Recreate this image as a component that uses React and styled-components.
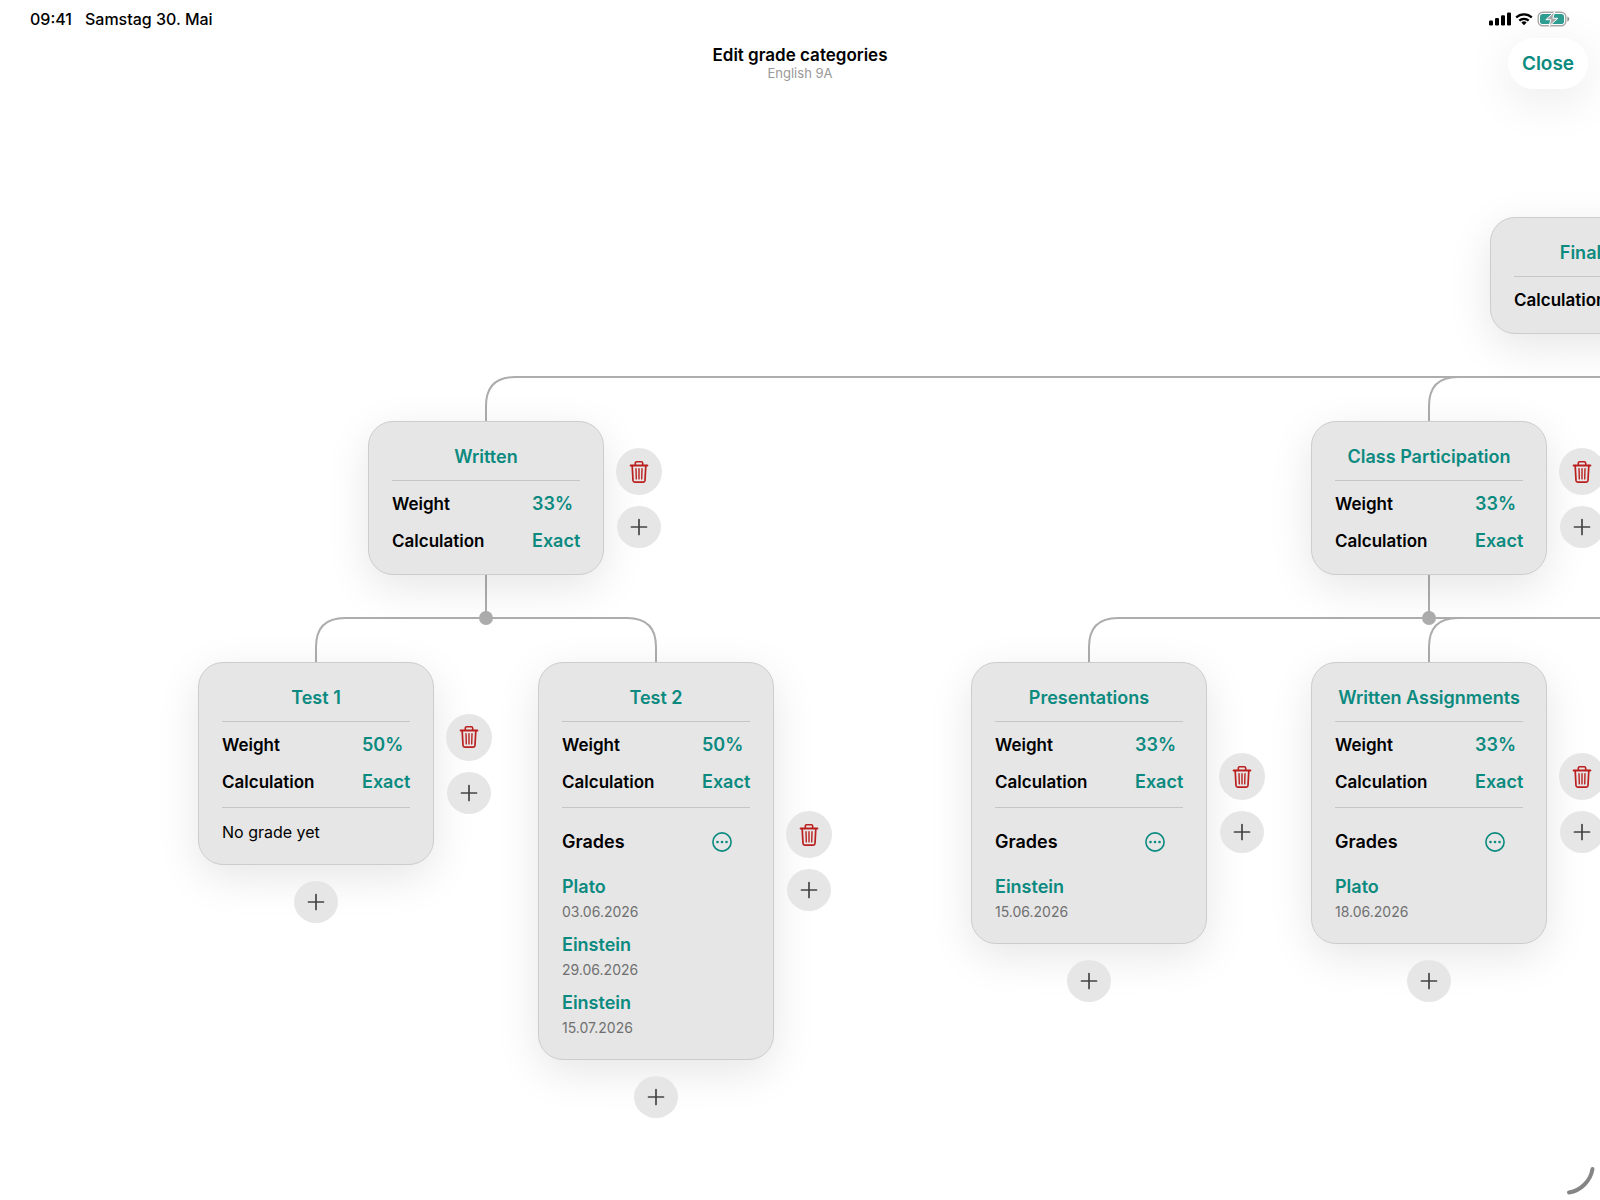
import React from 'react';
import styled, { createGlobalStyle } from 'styled-components';

const CARD_WIDTH = 236;
const BRANCH_GAP = 44;
const CORNER = 29;

const tree = [
  { id: 'final', x: 1490, y: 117, height: 117, name: 'Final grade', calculation: 'Exact' },
  { id: 'written', parent: 'final', x: 368, y: 321, height: 154, name: 'Written', weight: '33%', calculation: 'Exact' },
  { id: 'participation', parent: 'final', x: 1311, y: 321, height: 154, name: 'Class Participation', weight: '33%', calculation: 'Exact' },
  { id: 'test1', parent: 'written', x: 198, y: 562, name: 'Test 1', weight: '50%', calculation: 'Exact', grades: [] },
  {
    id: 'test2', parent: 'written', x: 538, y: 562, name: 'Test 2', weight: '50%', calculation: 'Exact',
    grades: [
      { name: 'Plato', date: '03.06.2026' },
      { name: 'Einstein', date: '29.06.2026' },
      { name: 'Einstein', date: '15.07.2026' },
    ],
  },
  {
    id: 'presentations', parent: 'participation', x: 971, y: 562, name: 'Presentations', weight: '33%', calculation: 'Exact',
    grades: [{ name: 'Einstein', date: '15.06.2026' }],
  },
  {
    id: 'assignments', parent: 'participation', x: 1311, y: 562, name: 'Written Assignments', weight: '33%', calculation: 'Exact',
    grades: [{ name: 'Plato', date: '18.06.2026' }],
  },
];

// curve from the parent's branch point down into the top of the child card;
// a child straight below its parent comes in from the right-hand branch
const branchPath = (parent, child) => {
  const px = parent.x + CARD_WIDTH / 2;
  const cx = child.x + CARD_WIDTH / 2;
  const y = child.y - BRANCH_GAP;
  const dir = cx > px ? -1 : 1;
  const start = cx === px ? px + CORNER : px;
  return `M${start} ${y} H${cx + dir * CORNER} Q${cx} ${y} ${cx} ${y + CORNER} V${child.y}`;
};

const Connectors = () => {
  const parents = tree.filter(n => tree.some(c => c.parent === n.id));
  return (
    <ConnectorLayer aria-hidden="true">
      {parents.map(p => {
        const px = p.x + CARD_WIDTH / 2;
        const kids = tree.filter(c => c.parent === p.id);
        const y = kids[0].y - BRANCH_GAP;
        return (
          <g key={p.id}>
            <path d={`M${px} ${p.y + p.height} V${y}`} />
            {kids.map(c => <path key={c.id} d={branchPath(p, c)} />)}
            {p.id === 'participation' && <path d={`M${px} ${y} H${px + 340}`} />}
            <circle cx={px} cy={y} r="7" />
          </g>
        );
      })}
    </ConnectorLayer>
  );
};

const TrashIcon = () => (
  <svg width="20" height="24" viewBox="0 0 20 24" fill="none" stroke="currentColor" strokeLinecap="round" strokeLinejoin="round" aria-hidden="true">
    <path d="M1.6 5.5h16.8" strokeWidth="1.9" />
    <path d="M6.3 5.300V3.200c0-.9.5-1.400 1.400-1.400h4.600c.9 0 1.400.5 1.400 1.400v2.100" strokeWidth="1.6" />
    <path d="M3.200 5.700l.8 14.700c.1 1.200.7 1.700 1.800 1.700h8.400c1.100 0 1.700-.5 1.800-1.700l.8-14.700" strokeWidth="1.7" />
    <path d="M7 8.700l.3 10.200M10 8.700v10.200M13 8.700l-.3 10.200" strokeWidth="1.400" />
  </svg>
);

const PlusIcon = () => (
  <svg width="18" height="18" viewBox="0 0 18 18" fill="none" stroke="currentColor" strokeWidth="1.7" strokeLinecap="round" aria-hidden="true">
    <path d="M9 1.500v15M1.500 9h15" />
  </svg>
);

const MoreIcon = () => (
  <svg width="20" height="20" viewBox="0 0 20 20" aria-hidden="true">
    <circle cx="10" cy="10" r="9.100" fill="none" stroke="currentColor" strokeWidth="1.600" />
    <circle cx="5.500" cy="10" r="1.300" fill="currentColor" />
    <circle cx="10" cy="10" r="1.300" fill="currentColor" />
    <circle cx="14.500" cy="10" r="1.300" fill="currentColor" />
  </svg>
);

const SignalIcon = () => (
  <svg width="22" height="14" viewBox="0 0 22 14" fill="#000" aria-hidden="true">
    <rect x="0" y="8.500" width="4" height="5" rx="1.200" />
    <rect x="6" y="6" width="4" height="7.500" rx="1.200" />
    <rect x="12" y="3.300" width="4" height="10.200" rx="1.200" />
    <rect x="18" y="0.500" width="4" height="13" rx="1.200" />
  </svg>
);

const WifiIcon = () => (
  <svg width="18" height="14" viewBox="0 0 18 14" aria-hidden="true">
    <g fill="none" stroke="#000" strokeWidth="2.300">
      <path d="M1.200 5.500a11.200 11.200 0 0 1 15.600 0" />
      <path d="M4.300 8.700a6.800 6.800 0 0 1 9.400 0" />
    </g>
    <path d="M9 13.200l-2.600-2.700a3.800 3.800 0 0 1 5.200 0z" fill="#000" />
  </svg>
);

const BatteryIcon = () => (
  <svg width="33" height="16" viewBox="0 0 33 16" aria-hidden="true">
    <rect x="1.200" y="1.200" width="27.600" height="13.600" rx="4.500" fill="#fff" stroke="#a9a9a9" strokeWidth="1.400" />
    <rect x="3" y="3" width="24" height="10" rx="2.800" fill="#2e9e93" />
    <path d="M30.400 5.500c1.200.4 1.800 1.300 1.800 2.500s-.6 2.100-1.800 2.500z" fill="#8c8c8c" />
    <path d="M17.600.8L8.800 8.700h5l-1.700 6.500 8.800-7.900h-5z" fill="#a9a9a9" stroke="#fff" strokeWidth="1" strokeLinejoin="round" />
  </svg>
);

const GradeSection = ({ grades }) => {
  if (!grades.length) {
    return <Section><EmptyMessage>No grade yet</EmptyMessage></Section>;
  }
  return (
    <Section>
      <GradesHeader>
        <GradesTitle>Grades</GradesTitle>
        <MoreButton type="button" aria-label="Grade options"><MoreIcon /></MoreButton>
      </GradesHeader>
      <GradeList>
        {grades.map(g => (
          <GradeItem key={g.date}>
            <TextButton type="button">{g.name}</TextButton>
            <GradeDate>{g.date}</GradeDate>
          </GradeItem>
        ))}
      </GradeList>
    </Section>
  );
};

const CategoryNode = ({ node }) => (
  <Node $x={node.x} $y={node.y}>
    <Card>
      <CardTitle><TextButton type="button">{node.name}</TextButton></CardTitle>
      {node.weight && (
        <Row>
          <Label id={`${node.id}-weight`}>Weight</Label>
          <Value><TextButton type="button" aria-describedby={`${node.id}-weight`}>{node.weight}</TextButton></Value>
        </Row>
      )}
      <Row>
        <Label id={`${node.id}-calc`}>Calculation</Label>
        <Value><TextButton type="button" aria-describedby={`${node.id}-calc`}>{node.calculation}</TextButton></Value>
      </Row>
      {node.grades && <GradeSection grades={node.grades} />}
    </Card>
    {node.parent && (
      <Actions>
        <DeleteButton type="button" aria-label={`Delete ${node.name}`}><TrashIcon /></DeleteButton>
        <AddButton type="button" aria-label={`Add category next to ${node.name}`}><PlusIcon /></AddButton>
      </Actions>
    )}
    {node.grades && (
      <AddChild>
        <AddButton type="button" aria-label={`Add category below ${node.name}`}><PlusIcon /></AddButton>
      </AddChild>
    )}
  </Node>
);

const App = () => (
  <Page>
    <GlobalStyle />
    <StatusBar>
      <span>09:41</span>
      <span>Samstag 30. Mai</span>
      <StatusIcons>
        <SignalIcon />
        <WifiIcon />
        <BatteryIcon />
      </StatusIcons>
    </StatusBar>
    <Header>
      <HeaderText>
        <Title>Edit grade categories</Title>
        <Subtitle>English 9A</Subtitle>
      </HeaderText>
      <CloseButton type="button">Close</CloseButton>
    </Header>
    <Canvas>
      <Connectors />
      {tree.map(node => <CategoryNode key={node.id} node={node} />)}
    </Canvas>
    <CornerHandle viewBox="0 0 30 30" aria-hidden="true">
      <path d="M3 26.500C15 24.500 24.500 15 26.500 3" />
    </CornerHandle>
  </Page>
);

export default App;

const GlobalStyle = createGlobalStyle`
  * { box-sizing: border-box; }
  body {
    margin: 0;
    background: #fff;
    color: #000;
    font-family: Inter, "Liberation Sans", sans-serif;
  }
  button {
    margin: 0;
    padding: 0;
    border: none;
    background: none;
    font: inherit;
    color: inherit;
    cursor: pointer;
  }
`;

const Page = styled.div`
  position: relative;
  display: flex;
  flex-direction: column;
  min-height: 100vh;
  overflow: hidden;
`;

const StatusBar = styled.div`
  display: flex;
  align-items: center;
  gap: 13px;
  height: 38px;
  padding: 0 30px;
  font-size: 16px;
  font-weight: 500;
`;

const StatusIcons = styled.div`
  display: flex;
  align-items: center;
  gap: 4px;
  margin-left: auto;
`;

const Header = styled.header`
  display: grid;
  grid-template-columns: 1fr auto 1fr;
  align-items: center;
  height: 51px;
  padding: 0 12px;
`;

const HeaderText = styled.div`
  grid-column: 2;
  padding-bottom: 2px;
  text-align: center;
`;

const Title = styled.h1`
  margin: 0;
  font-size: 17px;
  line-height: 20px;
  font-weight: 600;
`;

const Subtitle = styled.p`
  margin: 0;
  font-size: 13px;
  line-height: 16px;
  color: #999;
`;

const CloseButton = styled.button`
  justify-self: end;
  && {
    width: 80px;
    height: 51px;
    border-radius: 26px;
    background: #fff;
    color: #0b8a80;
    font-size: 19px;
    font-weight: 600;
    box-shadow: 0 10px 50px rgba(0, 0, 0, 0.09);
  }
`;

const Canvas = styled.main`
  position: relative;
  flex: 1;
  margin-top: 11px;
`;

const ConnectorLayer = styled.svg`
  position: absolute;
  inset: 0;
  width: 100%;
  height: 100%;
  overflow: visible;
  path { fill: none; stroke: #adadad; stroke-width: 2; }
  circle { fill: #adadad; }
`;

const Node = styled.section`
  position: absolute;
  left: ${p => p.$x}px;
  top: ${p => p.$y}px;
  display: grid;
  grid-template-columns: ${CARD_WIDTH}px 46px;
  column-gap: 12px;
  row-gap: 16px;
  align-items: center;
`;

const Card = styled.article`
  padding: 23px 23px 15px;
  border: 1px solid #cdcdcd;
  border-radius: 25px;
  background: #e6e6e6;
  box-shadow: 0 12px 44px rgba(0, 0, 0, 0.1);
`;

const CardTitle = styled.h2`
  display: flex;
  justify-content: center;
  margin: 0 0 4px;
  padding-bottom: 11px;
  border-bottom: 1px solid #c6c6c6;
  white-space: nowrap;
`;

const TextButton = styled.button`
  && {
    color: #0b8a80;
    font-size: 18px;
    line-height: 24px;
    font-weight: 600;
  }
`;

const Row = styled.div`
  display: flex;
  align-items: center;
  justify-content: space-between;
  height: 37px;
`;

const Label = styled.span`
  font-size: 17px;
  line-height: 24px;
  font-weight: 600;
`;

const Value = styled.div`
  display: flex;
  width: 48px;
`;

const Section = styled.div`
  margin-top: 7px;
  padding-top: 12px;
  border-top: 1px solid #c6c6c6;
`;

const EmptyMessage = styled.p`
  margin: 0;
  padding-bottom: 5px;
  font-size: 16px;
  line-height: 24px;
`;

const GradesHeader = styled.div`
  display: flex;
  align-items: center;
  justify-content: space-between;
  height: 44px;
  padding-right: 18px;
`;

const GradesTitle = styled.h3`
  margin: 0;
  font-size: 18px;
  line-height: 24px;
  font-weight: 600;
`;

const MoreButton = styled.button`
  && {
    display: flex;
    color: #0b8a80;
  }
`;

const GradeList = styled.ul`
  margin: 5px 0 0;
  padding: 0 0 1px;
  list-style: none;
`;

const GradeItem = styled.li`
  display: flex;
  flex-direction: column;
  align-items: flex-start;
  gap: 3px;
  padding: 6px 0 5px;
`;

const GradeDate = styled.time`
  font-size: 14px;
  line-height: 20px;
  color: #707070;
`;

const Actions = styled.div`
  display: flex;
  flex-direction: column;
  align-items: center;
  gap: 11px;
`;

const RoundButton = styled.button`
  && {
    display: flex;
    align-items: center;
    justify-content: center;
    border-radius: 50%;
    background: #e6e6e6;
  }
`;

const DeleteButton = styled(RoundButton)`
  && {
    width: 46px;
    height: 47px;
    color: #b9201f;
  }
`;

const AddButton = styled(RoundButton)`
  && {
    width: 44px;
    height: 42px;
    color: #444;
  }
`;

const AddChild = styled.div`
  grid-column: 1;
  justify-self: center;
`;

const CornerHandle = styled.svg`
  position: absolute;
  right: 4px;
  bottom: 4px;
  width: 30px;
  height: 30px;
  fill: none;
  stroke: #858585;
  stroke-width: 4;
  stroke-linecap: round;
`;
